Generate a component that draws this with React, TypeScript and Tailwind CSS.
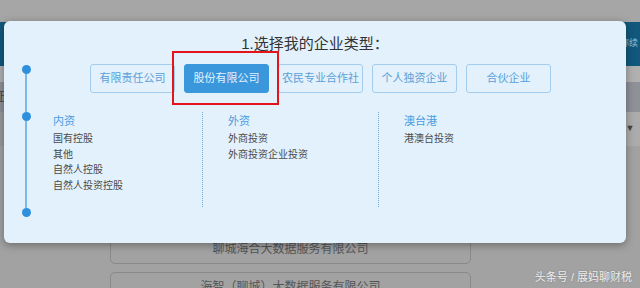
const types = ["有限责任公司", "股份有限公司", "农民专业合作社", "个人独资企业", "合伙企业"];

const groups = [
  { title: "内资", items: ["国有控股", "其他", "自然人控股", "自然人投资控股"], cls: "w-[155px] pl-[5px] border-r" },
  { title: "外资", items: ["外商投资", "外商投资企业投资"], cls: "w-[176px] pl-[25px] border-r" },
  { title: "澳台港", items: ["港澳台投资"], cls: "flex-1 pl-[25px]" },
];

function Dot() {
  return <div className="h-[9px] w-[9px] shrink-0 rounded-full bg-[#2e8fdd]" />;
}

export default function App() {
  return (
    <div className="relative h-[288px] w-[640px] overflow-hidden bg-[#a2a2a2] font-['Liberation_Sans','Noto_Sans_CJK_SC',sans-serif]">
      {/* page behind the dialog */}
      <div className="flex flex-col">
        <div className="h-[22px] bg-[#a6a6a6]" />
        <div className="flex h-[44px] items-center justify-end bg-[#12587c] pr-[2px]">
          <span className="text-[9px] text-[#9fc3d6]">称续</span>
        </div>
        <div className="h-[16px] bg-[#b0b0b0]" />
        <div className="flex h-[30px] items-center bg-[#8f9198]">
          <span className="ml-[-7px] text-[12px] text-[#444]">证</span>
        </div>
        <div className="flex h-[34px] items-center justify-end bg-[#9a9a9a]">
          <div className="flex h-full w-[20px] items-center justify-center bg-[#acacac] text-[9px] text-[#444]">▼</div>
        </div>
        <div className="h-[88px] bg-[#a2a2a2]" />
        <div className="flex flex-col gap-[8px] pl-[110px]">
          <div className="flex h-[30px] w-[361px] shrink-0 items-center justify-center rounded-[5px] border border-[#8a8a8a] text-[12px] text-[#555]">
            聊城海合大数据服务有限公司
          </div>
          <div className="flex h-[30px] w-[361px] shrink-0 items-center justify-center rounded-[5px] border border-[#8a8a8a] text-[12px] text-[#555]">
            海智（聊城）大数据服务有限公司
          </div>
        </div>
      </div>

      <div className="absolute bottom-[3px] right-[8px] text-[11px] text-[#eeeeee] [text-shadow:0_0_2px_rgba(0,0,0,0.25)]">
        头条号 / 展妈聊财税
      </div>

      {/* dialog */}
      <div className="absolute left-[4px] top-[21px] h-[222px] w-[622px] rounded-[6px] bg-[#e2f1fb] pt-[12px] shadow-[0_2px_8px_rgba(0,0,0,0.35)]">
        <div className="text-center text-[15px] leading-[22px] text-[#333]">1.选择我的企业类型：</div>
        <div className="flex">
          <div className="flex w-[44px] flex-col items-center pt-[10px]">
            <Dot />
            <div className="h-[38px] w-[2px] bg-[#7db8e6]" />
            <Dot />
            <div className="h-[87px] w-[2px] bg-[#7db8e6]" />
            <Dot />
          </div>
          <div className="flex-1 pt-[9px]">
            <div className="ml-[42px] flex gap-[9px]">
              {types.map((t, i) => (
                <div
                  key={t}
                  className={
                    i === 1
                      ? "flex h-[29px] w-[85px] items-center justify-center rounded-[3px] border border-[#3a97dc] bg-[#3a97dc] text-[11px] text-[#e3f1ff]"
                      : "flex h-[29px] w-[85px] items-center justify-center rounded-[3px] border border-[#a3cdee] text-[11px] text-[#5b9fd8]"
                  }
                >
                  {t}
                </div>
              ))}
            </div>
            <div className="mt-[19px] flex">
              {groups.map((g) => (
                <div key={g.title} className={`h-[95px] border-dotted border-[#6ea9d8] ${g.cls}`}>
                  <div className="text-[11px] leading-[18px] text-[#4b9ce0]">{g.title}</div>
                  <div className="mt-[1px]">
                    {g.items.map((it) => (
                      <div key={it} className="text-[10px] leading-[15.5px] text-[#4a4a4a]">
                        {it}
                      </div>
                    ))}
                  </div>
                </div>
              ))}
            </div>
          </div>
        </div>
        <div className="absolute left-[168px] top-[30px] h-[54px] w-[107px] border-2 border-[#e3151b]" />
      </div>
    </div>
  );
}
